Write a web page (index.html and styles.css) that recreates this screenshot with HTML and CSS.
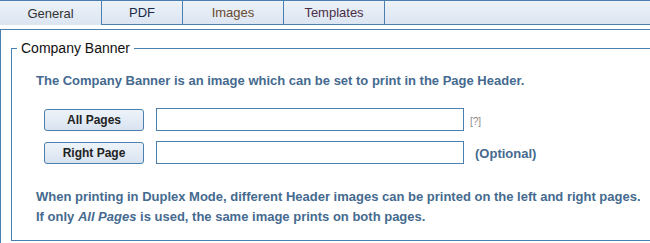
FILE: index.html
```html
<!DOCTYPE html>
<html>
<head>
<meta charset="utf-8">
<link rel="stylesheet" href="styles.css">
</head>
<body>
<div class="page">
  <div class="tabs">
    <div class="tab tab-general active">General</div>
    <div class="tab tab-pdf">PDF</div>
    <div class="tab tab-images">Images</div>
    <div class="tab tab-templates">Templates</div>
    <div class="tab-fill"></div>
  </div>
  <div class="panel">
    <fieldset class="group">
      <legend>Company Banner</legend>
      <p class="intro">The Company Banner is an image which can be set to print in the Page Header.</p>
      <div class="row">
        <button class="btn" type="button">All Pages</button>
        <input class="field" type="text">
        <span class="help">[?]</span>
      </div>
      <div class="row">
        <button class="btn" type="button">Right Page</button>
        <input class="field" type="text">
        <span class="opt">(Optional)</span>
      </div>
      <p class="note">When printing in Duplex Mode, different Header images can be printed on the left and right pages.<br>If only <i>All Pages</i> is used, the same image prints on both pages.</p>
    </fieldset>
  </div>
</div>
</body>
</html>
```
FILE: styles.css
```css
html, body {
  margin: 0;
  padding: 0;
  background: #fff;
  overflow: hidden;
}
body {
  width: 650px;
  height: 243px;
  font-family: "Liberation Sans", Arial, sans-serif;
}
.page {
  width: 690px;
}
.tabs {
  display: flex;
  border-top: 1px solid #4a7fb0;
  height: 25px;
  box-sizing: border-box;
}
.tab {
  box-sizing: border-box;
  height: 24px;
  border-right: 1px solid #4a7fb0;
  border-bottom: 1px solid #4a7fb0;
  background: linear-gradient(#edf2f8, #dbe5f1);
  font-size: 13px;
  display: flex;
  align-items: center;
  justify-content: center;
}
.tab.active {
  border-bottom: none;
}
.tab-general { width: 102px; color: #333; }
.tab-pdf { width: 81px; color: #1c2a48; }
.tab-images { width: 101px; color: #6a4a30; }
.tab-templates { width: 101px; color: #4a2d48; }
.tab-fill {
  flex: 1;
  box-sizing: border-box;
  height: 24px;
  border-bottom: 1px solid #4a7fb0;
  background: linear-gradient(#edf2f8, #dbe5f1);
}
.panel {
  margin-top: 4px;
  border-top: 1px solid #4a7fb0;
  border-left: 1px solid #4a7fb0;
  padding: 11px 0 0 10px;
  height: 300px;
}
.group {
  margin: 0;
  padding: 0 0 13px 24px;
  border: 1px solid #4a7fb0;
  min-width: 0;
}
.group legend {
  margin-left: -19px;
  padding: 0 4px;
  font-size: 14px;
  line-height: 15px;
  color: #111;
}
.intro {
  margin: 17px 0 0 0;
  font-size: 13px;
  font-weight: bold;
  color: #456a8f;
  line-height: 16px;
}
.row {
  display: flex;
  align-items: center;
  margin-left: 8px;
  height: 23px;
}
.intro + .row {
  margin-top: 19px;
}
.row + .row {
  margin-top: 10px;
}
.btn {
  box-sizing: border-box;
  width: 100px;
  height: 22px;
  margin: 1px 0 0 0;
  padding: 0;
  border: 1px solid #4a7fb0;
  border-radius: 3px;
  background: linear-gradient(#eef3f9, #d8e3f0);
  font-family: "Liberation Sans", Arial, sans-serif;
  font-size: 12px;
  font-weight: bold;
  color: #222;
}
.field {
  box-sizing: border-box;
  width: 308px;
  height: 23px;
  margin: 0 0 0 12px;
  padding: 0;
  border: 1px solid #4a7fb0;
  background: #fff;
}
.help {
  margin-left: 6px;
  font-size: 10px;
  color: #888;
  padding-top: 3px;
}
.opt {
  margin-left: 11px;
  font-size: 13px;
  font-weight: bold;
  color: #456a8f;
  padding-top: 2px;
}
.note {
  margin: 23px 0 0 0;
  font-size: 13px;
  font-weight: bold;
  color: #456a8f;
  line-height: 20px;
}
.note i {
  font-style: italic;
}
```
